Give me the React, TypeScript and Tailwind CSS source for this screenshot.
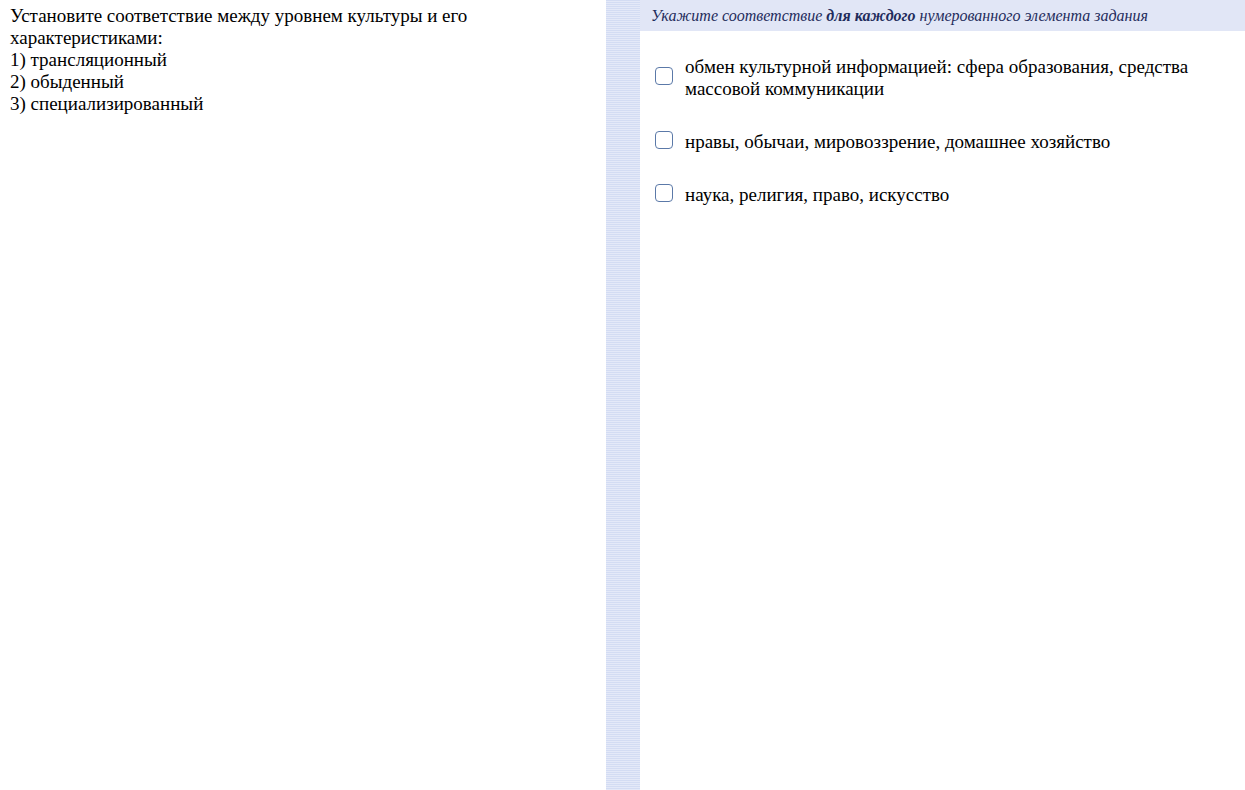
import React from 'react';

const answers = [
  'обмен культурной информацией: сфера образования, средства массовой коммуникации',
  'нравы, обычаи, мировоззрение, домашнее хозяйство',
  'наука, религия, право, искусство',
];

function Checkbox() {
  return <span className="mb-[4px] block h-[18px] w-[18px] shrink-0 rounded-[4px] border border-[#5b79a8] bg-white" />;
}

export default function App() {
  return (
    <div className="flex h-[790px] w-full bg-white font-['Liberation_Serif','Times_New_Roman',serif] text-black">
      {/* question */}
      <div className="w-[606px] shrink-0 px-[10px] pt-[5px] text-[19px] leading-[22px]">
        <p>Установите соответствие между уровнем культуры и его характеристиками:</p>
        <p>1) трансляционный</p>
        <p>2) обыденный</p>
        <p>3) специализированный</p>
      </div>

      {/* striped divider */}
      <div className="w-[34px] shrink-0 bg-[repeating-linear-gradient(to_bottom,#d3dcf3_0px,#d3dcf3_1px,#e4e9f8_1px,#e4e9f8_2px)]" />

      {/* answers */}
      <div className="flex-1">
        <div className="flex h-[31px] items-center bg-[#e1e6f6] pl-[11px] text-[16px] italic text-[#1f2c5c]">
          Укажите соответствие <b className="mx-[4px]">для каждого</b> нумерованного элемента задания
        </div>
        <div className="flex flex-col gap-[31px] pt-[25px] pl-[15px]">
          {answers.map((a) => (
            <div key={a} className="flex items-center gap-[12px]">
              <Checkbox />
              <p className="flex-1 pr-[20px] text-[19px] leading-[22px]">{a}</p>
            </div>
          ))}
        </div>
      </div>
    </div>
  );
}
